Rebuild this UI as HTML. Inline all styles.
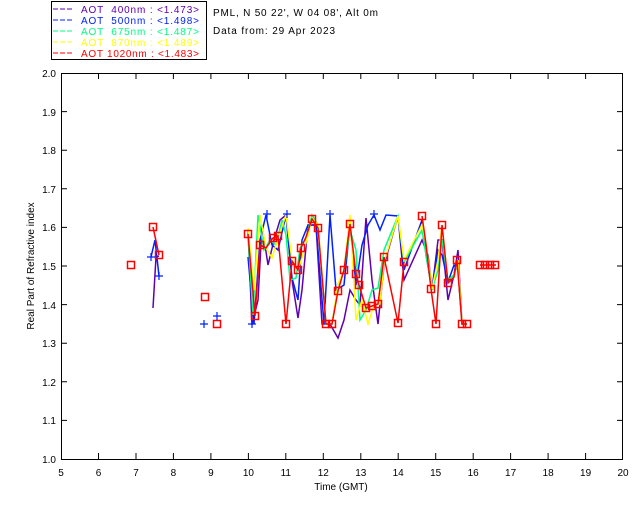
<!DOCTYPE html>
<html><head><style>
html,body{margin:0;padding:0;background:#fff;}
svg{display:block;font-family:"Liberation Sans",sans-serif;}
text{font-size:10px;}
</style></head><body>
<svg width="640" height="512" viewBox="0 0 640 512" xmlns="http://www.w3.org/2000/svg">
<rect x="0" y="0" width="640" height="512" fill="#fff"/>
<rect x="51.5" y="1.5" width="155" height="58" fill="none" stroke="#000"/>
<g stroke-width="1" stroke-dasharray="5,2">
<line x1="53" y1="9" x2="74" y2="9" stroke="#6000b0"/>
<line x1="53" y1="20" x2="74" y2="20" stroke="#0020ff"/>
<line x1="53" y1="31" x2="74" y2="31" stroke="#00ff80"/>
<line x1="53" y1="42" x2="74" y2="42" stroke="#ffff00"/>
<line x1="53" y1="53" x2="74" y2="53" stroke="#ff0000"/>
</g>
<g style="font-size:11px">
<text x="81" y="13" fill="#6000b0" textLength="118" xml:space="preserve">AOT  400nm : &lt;1.473&gt;</text>
<text x="81" y="24" fill="#0020ff" textLength="118" xml:space="preserve">AOT  500nm : &lt;1.498&gt;</text>
<text x="81" y="35" fill="#00ff80" textLength="118" xml:space="preserve">AOT  675nm : &lt;1.487&gt;</text>
<text x="81" y="46" fill="#ffff00" textLength="118" xml:space="preserve">AOT  870nm : &lt;1.489&gt;</text>
<text x="81" y="57" fill="#ff0000" textLength="118" xml:space="preserve">AOT 1020nm : &lt;1.483&gt;</text>
</g>
<text x="213" y="16" fill="#000" textLength="165">PML, N 50 22', W 04 08', Alt 0m</text>
<text x="213" y="34" fill="#000" textLength="122">Data from: 29 Apr 2023</text>
<rect x="61.5" y="73.5" width="561" height="386" fill="none" stroke="#000"/>
<g stroke="#000">
<path d="M98.5 459v-6M136 459v-6M173.4 459v-6M210.9 459v-6M248.4 459v-6M285.8 459v-6M323.3 459v-6M360.8 459v-6M398.2 459v-6M435.7 459v-6M473.2 459v-6M510.6 459v-6M548.1 459v-6M585.6 459v-6"/>
<path d="M98.5 73v6M136 73v6M173.4 73v6M210.9 73v6M248.4 73v6M285.8 73v6M323.3 73v6M360.8 73v6M398.2 73v6M435.7 73v6M473.2 73v6M510.6 73v6M548.1 73v6M585.6 73v6"/>
<path d="M61 420.4h6M61 381.8h6M61 343.2h6M61 304.6h6M61 266h6M61 227.4h6M61 188.8h6M61 150.2h6M61 111.6h6"/>
<path d="M623 420.4h-6M623 381.8h-6M623 343.2h-6M623 304.6h-6M623 266h-6M623 227.4h-6M623 188.8h-6M623 150.2h-6M623 111.6h-6"/>
</g>
<g fill="#000" text-anchor="end">
<text x="56" y="463">1.0</text><text x="56" y="424">1.1</text><text x="56" y="386">1.2</text>
<text x="56" y="347">1.3</text><text x="56" y="309">1.4</text><text x="56" y="270">1.5</text>
<text x="56" y="231">1.6</text><text x="56" y="193">1.7</text><text x="56" y="154">1.8</text>
<text x="56" y="116">1.9</text><text x="56" y="77">2.0</text>
</g>
<g fill="#000" text-anchor="middle">
<text x="61" y="476">5</text><text x="98.5" y="476">6</text><text x="136" y="476">7</text>
<text x="173.4" y="476">8</text><text x="210.9" y="476">9</text><text x="248.4" y="476">10</text>
<text x="285.8" y="476">11</text><text x="323.3" y="476">12</text><text x="360.8" y="476">13</text>
<text x="398.2" y="476">14</text><text x="435.7" y="476">15</text><text x="473.2" y="476">16</text>
<text x="510.6" y="476">17</text><text x="548.1" y="476">18</text><text x="585.6" y="476">19</text>
<text x="623" y="476">20</text>
<text x="341" y="490">Time (GMT)</text>
</g>
<text transform="translate(34,266) rotate(-90)" text-anchor="middle" fill="#000">Real Part of Refractive index</text>
<g fill="none" stroke-width="1.5">
<polyline stroke="#6000b0" points="153,308 156,257 159,256"/>
<polyline stroke="#6000b0" points="248,230 252,325 258,300 262,225 268,265 274,240 280,220 286,215 292,280 298,318 302,290 308,225 316,225 322,324 330,324 338,338 344,320 350,290 356,300 360,305 366,218 372,280 378,324 384,265 398,216 404,280 422,240 428,255 432,290 438,240 442,240 448,300 454,275 458,250 462,324 467,324"/>
<polyline stroke="#0020ff" points="151,257 155,240 159,276"/>
<polyline stroke="#0020ff" points="248,257 254,324 260,240 266,215 272,245 278,250 286,215 292,278 298,300 302,240 308,225 316,225 324,324 330,215 336,290 344,285 350,225 356,285 362,245 368,225 374,215 380,230 386,215 398,216 404,270 422,220 426,255 432,290 438,250 442,255 448,282 454,265 458,270 462,324 467,324"/>
<polyline stroke="#00ff80" points="248,235 253,315 258,215 264,250 270,240 276,245 282,220 286,235 290,280 296,278 300,248 306,238 312,215 318,225 326,324 332,324 338,285 344,270 350,230 356,250 360,320 366,310 372,290 378,288 384,250 398,216 404,262 422,230 426,255 432,290 438,270 442,240 448,280 454,275 458,262 462,324 467,324"/>
<polyline stroke="#ffff00" points="248,228 254,290 260,215 266,248 272,258 278,238 286,215 292,260 298,270 302,258 308,235 312,218 318,225 326,324 332,324 338,284 344,270 350,215 356,320 362,300 368,324 374,305 380,304 384,262 398,216 404,260 422,225 426,244 432,289 438,260 442,225 448,283 454,277 458,260 462,324 467,324"/>
<polyline stroke="#ff0000" points="153,227 159,255"/>
<polyline stroke="#ff0000" points="248,234 255,316 260,245 266,248 273,238 278,236 286,324 292,261 298,270 301,248 306,237 312,219 318,228 326,324 332,324 338,291 344,270 350,224 356,274 359,285 366,308 372,306 378,304 384,257 398,323 404,262"/>
<polyline stroke="#ff0000" points="422,216 426,244 431,289 436,324 442,225 448,283 454,277 457,260 462,324 467,324"/>
<polyline stroke="#ff0000" points="480,265 496,265"/>
</g>
<g fill="none" stroke="#ff0000" stroke-width="1.5">
<rect x="127.5" y="261.5" width="7" height="7"/><rect x="149.5" y="223.5" width="7" height="7"/><rect x="155.5" y="251.5" width="7" height="7"/>
<rect x="201.5" y="293.5" width="7" height="7"/><rect x="213.5" y="320.5" width="7" height="7"/>
<rect x="244.5" y="230.5" width="7" height="7"/><rect x="251.5" y="312.5" width="7" height="7"/><rect x="256.5" y="241.5" width="7" height="7"/>
<rect x="269.5" y="234.5" width="7" height="7"/><rect x="274.5" y="232.5" width="7" height="7"/><rect x="282.5" y="320.5" width="7" height="7"/>
<rect x="288.5" y="257.5" width="7" height="7"/><rect x="294.5" y="266.5" width="7" height="7"/><rect x="297.5" y="244.5" width="7" height="7"/>
<rect x="308.5" y="215.5" width="7" height="7"/><rect x="314.5" y="224.5" width="7" height="7"/><rect x="322.5" y="320.5" width="7" height="7"/>
<rect x="328.5" y="320.5" width="7" height="7"/><rect x="334.5" y="287.5" width="7" height="7"/><rect x="340.5" y="266.5" width="7" height="7"/>
<rect x="346.5" y="220.5" width="7" height="7"/><rect x="352.5" y="270.5" width="7" height="7"/><rect x="355.5" y="281.5" width="7" height="7"/>
<rect x="362.5" y="304.5" width="7" height="7"/><rect x="368.5" y="302.5" width="7" height="7"/><rect x="374.5" y="300.5" width="7" height="7"/>
<rect x="380.5" y="253.5" width="7" height="7"/><rect x="394.5" y="319.5" width="7" height="7"/><rect x="400.5" y="258.5" width="7" height="7"/>
<rect x="418.5" y="212.5" width="7" height="7"/><rect x="427.5" y="285.5" width="7" height="7"/><rect x="432.5" y="320.5" width="7" height="7"/>
<rect x="438.5" y="221.5" width="7" height="7"/><rect x="444.5" y="279.5" width="7" height="7"/><rect x="453.5" y="256.5" width="7" height="7"/>
<rect x="458.5" y="320.5" width="7" height="7"/><rect x="463.5" y="320.5" width="7" height="7"/>
<rect x="476.5" y="261.5" width="7" height="7"/><rect x="481.5" y="261.5" width="7" height="7"/><rect x="486.5" y="261.5" width="7" height="7"/><rect x="491.5" y="261.5" width="7" height="7"/>
</g>
<g fill="none" stroke="#0020ff" stroke-width="1.2">
<path d="M200 324h8M204 320v8M213 316h8M217 312v8M248 324h8M252 320v8M263 214h8M267 210v8M283 214h8M287 210v8M326 214h8M330 210v8M370 214h8M374 210v8M147 257h8M151 253v8M155 276h8M159 272v8"/>
</g>
</svg>
</body></html>
